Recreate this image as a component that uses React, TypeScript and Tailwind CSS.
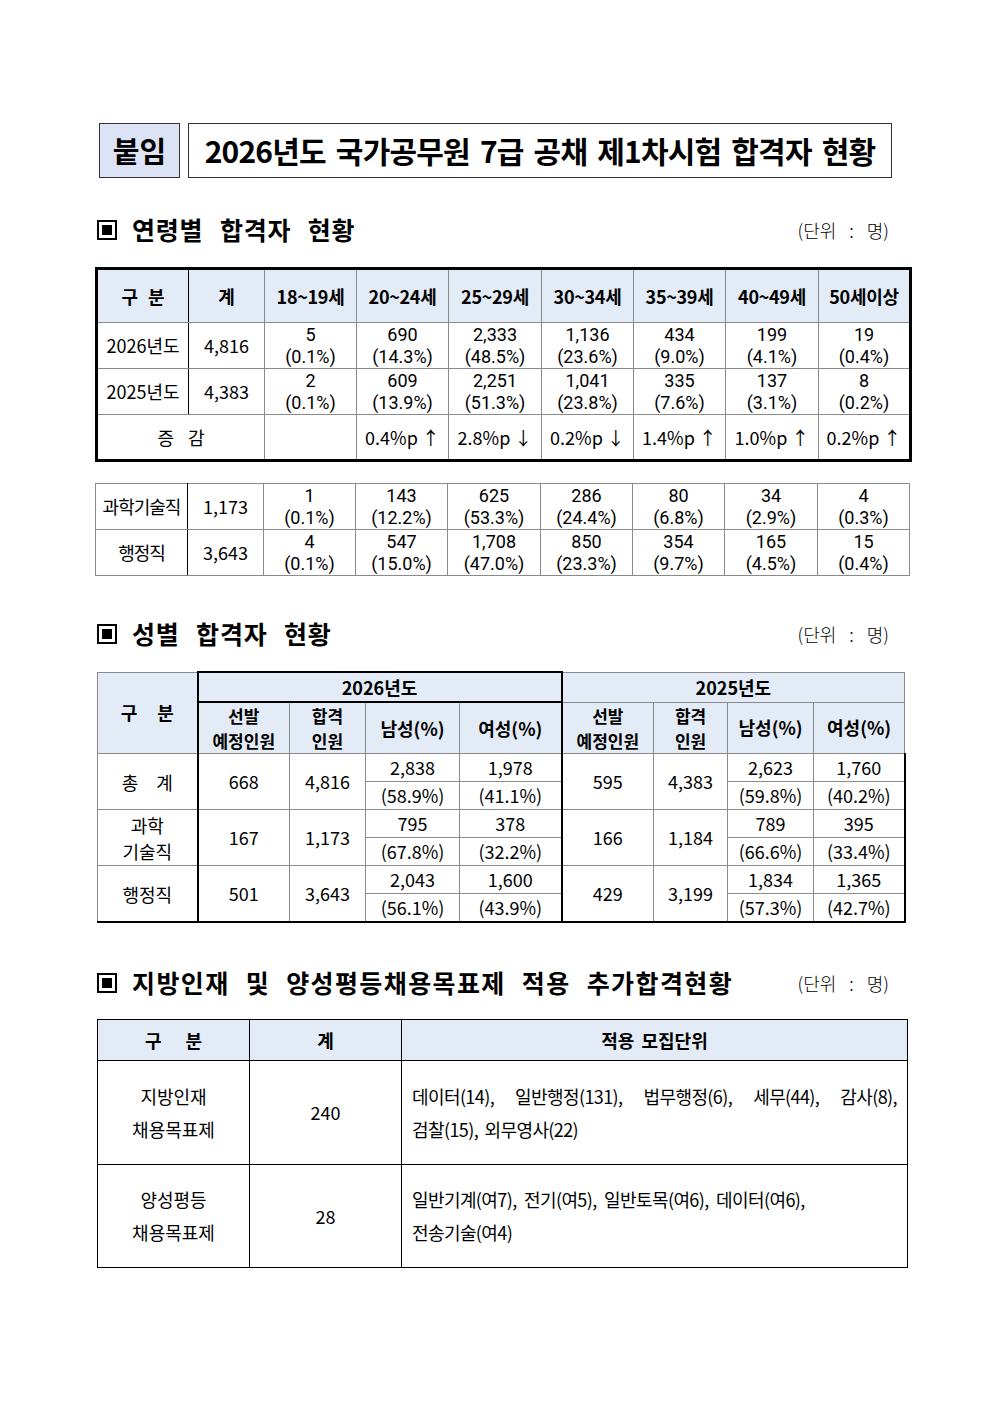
const FONT = "font-['Noto_Sans_CJK_KR','Noto_Sans',sans-serif]";
const NUM = "font-['Roboto','Noto_Sans_CJK_KR',sans-serif]";

const AGES = ['18~19세', '20~24세', '25~29세', '30~34세', '35~39세', '40~49세', '50세이상'];

const AGE_ROWS = [
  {
    label: '2026년도',
    total: '4,816',
    vals: [['5', '0.1%'], ['690', '14.3%'], ['2,333', '48.5%'], ['1,136', '23.6%'], ['434', '9.0%'], ['199', '4.1%'], ['19', '0.4%']]
  },
  {
    label: '2025년도',
    total: '4,383',
    vals: [['2', '0.1%'], ['609', '13.9%'], ['2,251', '51.3%'], ['1,041', '23.8%'], ['335', '7.6%'], ['137', '3.1%'], ['8', '0.2%']]
  }
];

const CHANGES = ['', '0.4%p ↑', '2.8%p ↓', '0.2%p ↓', '1.4%p ↑', '1.0%p ↑', '0.2%p ↑'];

const JOB_ROWS = [
  {
    label: '과학기술직',
    total: '1,173',
    vals: [['1', '0.1%'], ['143', '12.2%'], ['625', '53.3%'], ['286', '24.4%'], ['80', '6.8%'], ['34', '2.9%'], ['4', '0.3%']]
  },
  {
    label: '행정직',
    total: '3,643',
    vals: [['4', '0.1%'], ['547', '15.0%'], ['1,708', '47.0%'], ['850', '23.3%'], ['354', '9.7%'], ['165', '4.5%'], ['15', '0.4%']]
  }
];

type Year = { plan: string; pass: string; male: [string, string]; female: [string, string] };

const GENDER_ROWS: { label: React.ReactNode; y26: Year; y25: Year }[] = [
  {
    label: '총　계',
    y26: { plan: '668', pass: '4,816', male: ['2,838', '58.9%'], female: ['1,978', '41.1%'] },
    y25: { plan: '595', pass: '4,383', male: ['2,623', '59.8%'], female: ['1,760', '40.2%'] }
  },
  {
    label: (
      <>
        과학
        <br />
        기술직
      </>
    ),
    y26: { plan: '167', pass: '1,173', male: ['795', '67.8%'], female: ['378', '32.2%'] },
    y25: { plan: '166', pass: '1,184', male: ['789', '66.6%'], female: ['395', '33.4%'] }
  },
  {
    label: '행정직',
    y26: { plan: '501', pass: '3,643', male: ['2,043', '56.1%'], female: ['1,600', '43.9%'] },
    y25: { plan: '429', pass: '3,199', male: ['1,834', '57.3%'], female: ['1,365', '42.7%'] }
  }
];

const HEAD = 'bg-[#e2ebf6] font-bold';
const CELL = 'border border-[#8a8a8a] text-center align-middle p-0';
const TWO_LINE = 'text-[17px] leading-[25px]';

function SectionTitle({ children, wide }: { children: React.ReactNode; wide?: boolean }) {
  return (
    <div className="flex h-[30px] w-[792px] items-center justify-between">
      <div className="flex items-center">
        <span className="flex h-[20px] w-[20px] items-center justify-center border-2 border-black">
          <span className="h-[10px] w-[10px] bg-black" />
        </span>
        <span
          className={
            wide
              ? 'ml-[15px] text-[25px] font-bold tracking-[1.4px] [word-spacing:9px]'
              : 'ml-[15px] text-[25px] font-bold tracking-[0.8px] [word-spacing:10px]'
          }
        >
          {children}
        </span>
      </div>
      <span className="text-[18px] font-light [word-spacing:9px]">(단위 : 명)</span>
    </div>
  );
}

function Pair({ a, b }: { a: string; b: string }) {
  return (
    <div className={`${NUM} text-[18px] leading-[22px]`}>
      <div>{a}</div>
      <div>({b})</div>
    </div>
  );
}

function AgeColumns() {
  return (
    <colgroup>
      <col className="w-[92px]" />
      <col className="w-[76px]" />
      <col className="w-[92px]" />
      <col className="w-[92px]" />
      <col className="w-[93px]" />
      <col className="w-[92px]" />
      <col className="w-[92px]" />
      <col className="w-[93px]" />
      <col className="w-[92px]" />
    </colgroup>
  );
}

function AgeTable() {
  return (
    <table className="w-[814px] table-fixed border-collapse border-[3px] border-black text-[18px]">
      <AgeColumns />
      <tbody>
        <tr className="h-[54px]">
          <td className={`${CELL} ${HEAD} border-r-black [word-spacing:6px]`}>구 분</td>
          <td className={`${CELL} ${HEAD}`}>계</td>
          {AGES.map((age) => (
            <td key={age} className={`${CELL} ${HEAD} tracking-[-0.3px]`}>
              {age}
            </td>
          ))}
        </tr>
        {AGE_ROWS.map((row) => (
          <tr key={row.label} className="h-[46px]">
            <td className={`${CELL} border-r-black`}>{row.label}</td>
            <td className={CELL}>{row.total}</td>
            {row.vals.map(([a, b], i) => (
              <td key={i} className={CELL}>
                <Pair a={a} b={b} />
              </td>
            ))}
          </tr>
        ))}
        <tr className="h-[46px]">
          <td colSpan={2} className={`${CELL} [word-spacing:10px]`}>
            증 감
          </td>
          {CHANGES.map((c, i) => (
            <td key={i} className={CELL}>
              {c}
            </td>
          ))}
        </tr>
      </tbody>
    </table>
  );
}

function JobTable() {
  return (
    <table className="w-[814px] table-fixed border-collapse border border-black text-[18px]">
      <AgeColumns />
      <tbody>
        {JOB_ROWS.map((row) => (
          <tr key={row.label} className="h-[46px]">
            <td className={`${CELL} border-r-black tracking-[-1px]`}>{row.label}</td>
            <td className={CELL}>{row.total}</td>
            {row.vals.map(([a, b], i) => (
              <td key={i} className={CELL}>
                <Pair a={a} b={b} />
              </td>
            ))}
          </tr>
        ))}
      </tbody>
    </table>
  );
}

function YearCells({ y, first, thick, last }: { y: Year; first: boolean; thick?: boolean; last?: boolean }) {
  const edgeL = thick ? 'border-l-2 border-l-black' : '';
  const edgeR = thick || last ? 'border-r-2 border-r-black' : '';
  if (first) {
    return (
      <>
        <td rowSpan={2} className={`${CELL} ${edgeL}`}>
          {y.plan}
        </td>
        <td rowSpan={2} className={CELL}>
          {y.pass}
        </td>
        <td className={CELL}>{y.male[0]}</td>
        <td className={`${CELL} ${edgeR}`}>{y.female[0]}</td>
      </>
    );
  }
  return (
    <>
      <td className={CELL}>({y.male[1]})</td>
      <td className={`${CELL} ${edgeR}`}>({y.female[1]})</td>
    </>
  );
}

function GenderTable() {
  return (
    <table className="w-[807px] table-fixed border-collapse border border-black text-[18px]">
      <colgroup>
        <col className="w-[100px]" />
        <col className="w-[92px]" />
        <col className="w-[76px]" />
        <col className="w-[94px]" />
        <col className="w-[102px]" />
        <col className="w-[92px]" />
        <col className="w-[74px]" />
        <col className="w-[86px]" />
        <col className="w-[91px]" />
      </colgroup>
      <tbody>
        <tr className="h-[30px]">
          <td rowSpan={2} className={`${CELL} ${HEAD} [word-spacing:16px]`}>
            구 분
          </td>
          <td colSpan={4} className={`${CELL} ${HEAD} border-2 border-black`}>
            2026년도
          </td>
          <td colSpan={4} className={`${CELL} ${HEAD}`}>
            2025년도
          </td>
        </tr>
        <tr className="h-[50px]">
          <td className={`${CELL} ${HEAD} border-l-2 border-l-black ${TWO_LINE}`}>
            선발
            <br />
            예정인원
          </td>
          <td className={`${CELL} ${HEAD} ${TWO_LINE}`}>
            합격
            <br />
            인원
          </td>
          <td className={`${CELL} ${HEAD}`}>남성(%)</td>
          <td className={`${CELL} ${HEAD} border-r-2 border-r-black`}>여성(%)</td>
          <td className={`${CELL} ${HEAD} ${TWO_LINE}`}>
            선발
            <br />
            예정인원
          </td>
          <td className={`${CELL} ${HEAD} ${TWO_LINE}`}>
            합격
            <br />
            인원
          </td>
          <td className={`${CELL} ${HEAD}`}>남성(%)</td>
          <td className={`${CELL} ${HEAD}`}>여성(%)</td>
        </tr>
        {GENDER_ROWS.map((row, idx) => {
          const lastGroup = idx === GENDER_ROWS.length - 1;
          return [0, 1].map((part) => (
            <tr key={`${idx}-${part}`} className={lastGroup && part === 1 ? 'h-[28px] border-b-2 border-black' : 'h-[28px]'}>
              {part === 0 && (
                <td rowSpan={2} className={`${CELL} leading-[26px]`}>
                  {row.label}
                </td>
              )}
              <YearCells y={row.y26} first={part === 0} thick />
              <YearCells y={row.y25} first={part === 0} last />
            </tr>
          ));
        })}
      </tbody>
    </table>
  );
}

function ExtraTable() {
  return (
    <table className="w-[810px] table-fixed border-collapse border border-black text-[18px]">
      <colgroup>
        <col className="w-[152px]" />
        <col className="w-[152px]" />
        <col className="w-[506px]" />
      </colgroup>
      <tbody>
        <tr className="h-[41px]">
          <td className={`${CELL} ${HEAD} border-black [word-spacing:20px]`}>구 분</td>
          <td className={`${CELL} ${HEAD} border-black`}>계</td>
          <td className={`${CELL} ${HEAD} border-black [word-spacing:3px]`}>적용 모집단위</td>
        </tr>
        <tr className="h-[104px]">
          <td className={`${CELL} border-black leading-[33px]`}>
            지방인재
            <br />
            채용목표제
          </td>
          <td className={`${CELL} border-black`}>240</td>
          <td className={`${CELL} border-black px-[10px] text-left leading-[33px] tracking-[-0.6px]`}>
            <div className="flex justify-between">
              <span>데이터(14),</span>
              <span>일반행정(131),</span>
              <span>법무행정(6),</span>
              <span>세무(44),</span>
              <span>감사(8),</span>
            </div>
            <div className="[word-spacing:3px]">검찰(15), 외무영사(22)</div>
          </td>
        </tr>
        <tr className="h-[103px]">
          <td className={`${CELL} border-black leading-[33px]`}>
            양성평등
            <br />
            채용목표제
          </td>
          <td className={`${CELL} border-black`}>28</td>
          <td className={`${CELL} border-black px-[10px] text-left leading-[33px] tracking-[-0.6px] [word-spacing:4px]`}>
            <div>일반기계(여7), 전기(여5), 일반토목(여6), 데이터(여6),</div>
            <div>전송기술(여4)</div>
          </td>
        </tr>
      </tbody>
    </table>
  );
}

export default function App() {
  return (
    <div className={`${FONT} min-h-[1401px] w-[991px] bg-white pt-[123px] text-black`}>
      <div className="ml-[99px] flex gap-[8px]">
        <div className="flex h-[55px] w-[81px] items-center justify-center border border-[#333] bg-[#dde3f7]">
          <span className="text-[29px] font-bold">붙임</span>
        </div>
        <div className="flex h-[55px] w-[704px] items-center justify-center border border-[#333]">
          <span className="text-[30px] font-bold tracking-[-0.8px] [word-spacing:4px]">
            2026년도 국가공무원 7급 공채 제1차시험 합격자 현황
          </span>
        </div>
      </div>

      <div className="ml-[97px] mt-[37px]">
        <SectionTitle>연령별 합격자 현황</SectionTitle>
      </div>
      <div className="ml-[95px] mt-[22px]">
        <AgeTable />
      </div>
      <div className="ml-[95px] mt-[21px]">
        <JobTable />
      </div>

      <div className="ml-[97px] mt-[43px]">
        <SectionTitle>성별 합격자 현황</SectionTitle>
      </div>
      <div className="ml-[97px] mt-[22px]">
        <GenderTable />
      </div>

      <div className="ml-[97px] mt-[45px]">
        <SectionTitle wide>지방인재 및 양성평등채용목표제 적용 추가합격현황</SectionTitle>
      </div>
      <div className="ml-[97px] mt-[21px]">
        <ExtraTable />
      </div>
    </div>
  );
}
